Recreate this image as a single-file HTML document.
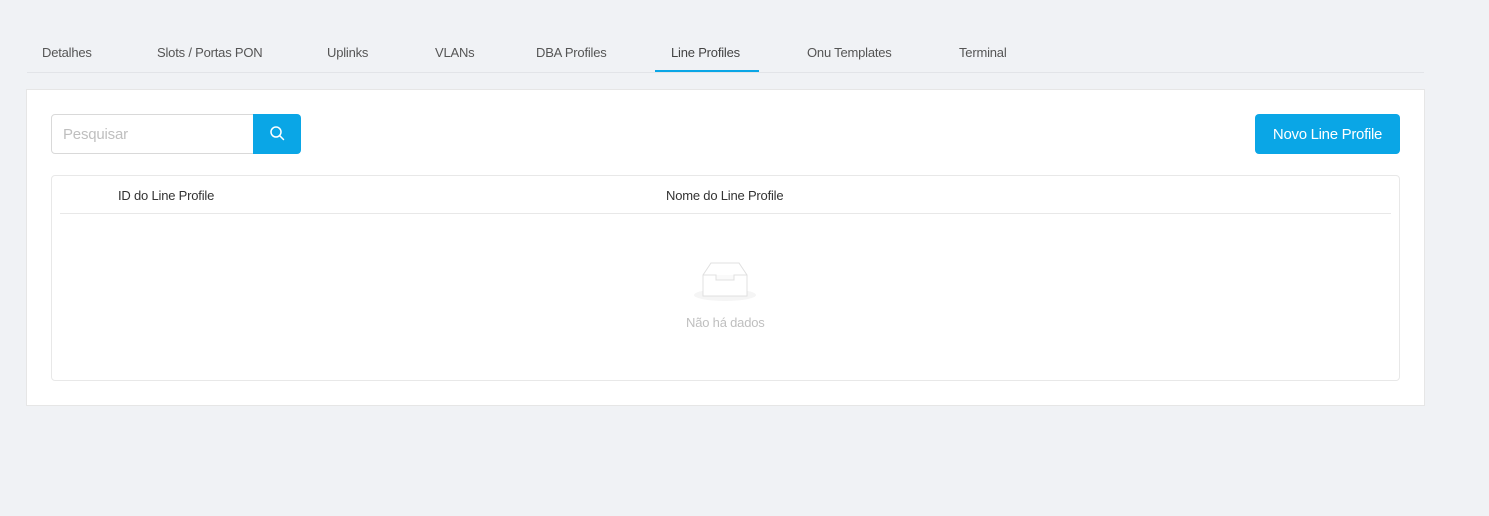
<!DOCTYPE html>
<html><head><meta charset="utf-8"><style>
*{margin:0;padding:0;box-sizing:border-box}
body{width:1489px;height:516px;background:#f0f2f5;font-family:"Liberation Sans",sans-serif;position:relative;overflow:hidden}
.a{position:absolute}
.tab{position:absolute;top:45px;font-size:13px;color:#555;white-space:nowrap;letter-spacing:-0.2px}
</style></head><body>
<div class="a" style="left:27px;top:72px;width:1397px;height:1px;background:#e2e4e8"></div>
<div class="tab" style="left:42px">Detalhes</div>
<div class="tab" style="left:157px">Slots / Portas PON</div>
<div class="tab" style="left:327px">Uplinks</div>
<div class="tab" style="left:435px">VLANs</div>
<div class="tab" style="left:536px">DBA Profiles</div>
<div class="tab" style="left:671px;color:#444">Line Profiles</div>
<div class="tab" style="left:807px">Onu Templates</div>
<div class="tab" style="left:959px">Terminal</div>
<div class="a" style="left:655px;top:70px;width:104px;height:2px;background:#0aa6e6"></div>

<div class="a" style="left:26px;top:89px;width:1399px;height:317px;background:#fff;border:1px solid #e6e6e6"></div>
<div class="a" style="left:51px;top:114px;width:203px;height:40px;border:1px solid #d9d9d9;border-radius:4px 0 0 4px;background:#fff"></div>
<div class="a" style="left:63px;top:126px;font-size:15px;color:#bfbfbf;letter-spacing:-0.2px">Pesquisar</div>
<div class="a" style="left:253px;top:114px;width:48px;height:40px;background:#0aa6e6;border-radius:0 4px 4px 0">
<svg width="48" height="40" viewBox="0 0 48 40"><circle cx="23" cy="18" r="5" fill="none" stroke="#fff" stroke-width="1.5"/><line x1="26.7" y1="21.7" x2="30.5" y2="25.5" stroke="#fff" stroke-width="1.5" stroke-linecap="round"/></svg></div>
<div class="a" style="left:1255px;top:114px;width:145px;height:40px;background:#0aa6e6;border-radius:4px;color:#fff;font-size:15px;line-height:40px;text-align:center;letter-spacing:-0.3px;padding-top:1px">Novo Line Profile</div>

<div class="a" style="left:51px;top:175px;width:1349px;height:206px;border:1px solid #e8e8e8;border-radius:4px"></div>
<div class="a" style="left:118px;top:188px;font-size:13px;color:#333;letter-spacing:-0.2px">ID do Line Profile</div>
<div class="a" style="left:666px;top:188px;font-size:13px;color:#333;letter-spacing:-0.2px">Nome do Line Profile</div>
<div class="a" style="left:60px;top:213px;width:1331px;height:1px;background:#e8e8e8"></div>
<svg class="a" style="left:692px;top:260px" width="66" height="44" viewBox="0 0 66 44">
<ellipse cx="33" cy="35" rx="31" ry="6" fill="#f5f5f5"/>
<path d="M11 15 L19 3 H47 L55 15 V36 H11 Z" fill="#fff" stroke="#e0e0e0" stroke-width="1"/>
<path d="M11 15 H24 V20 H42 V15 H55" fill="#fafafa" stroke="#e0e0e0" stroke-width="1"/>
</svg>
<div class="a" style="left:686px;top:315px;font-size:13px;color:#bfbfbf;letter-spacing:-0.2px">Não há dados</div>
</body></html>
